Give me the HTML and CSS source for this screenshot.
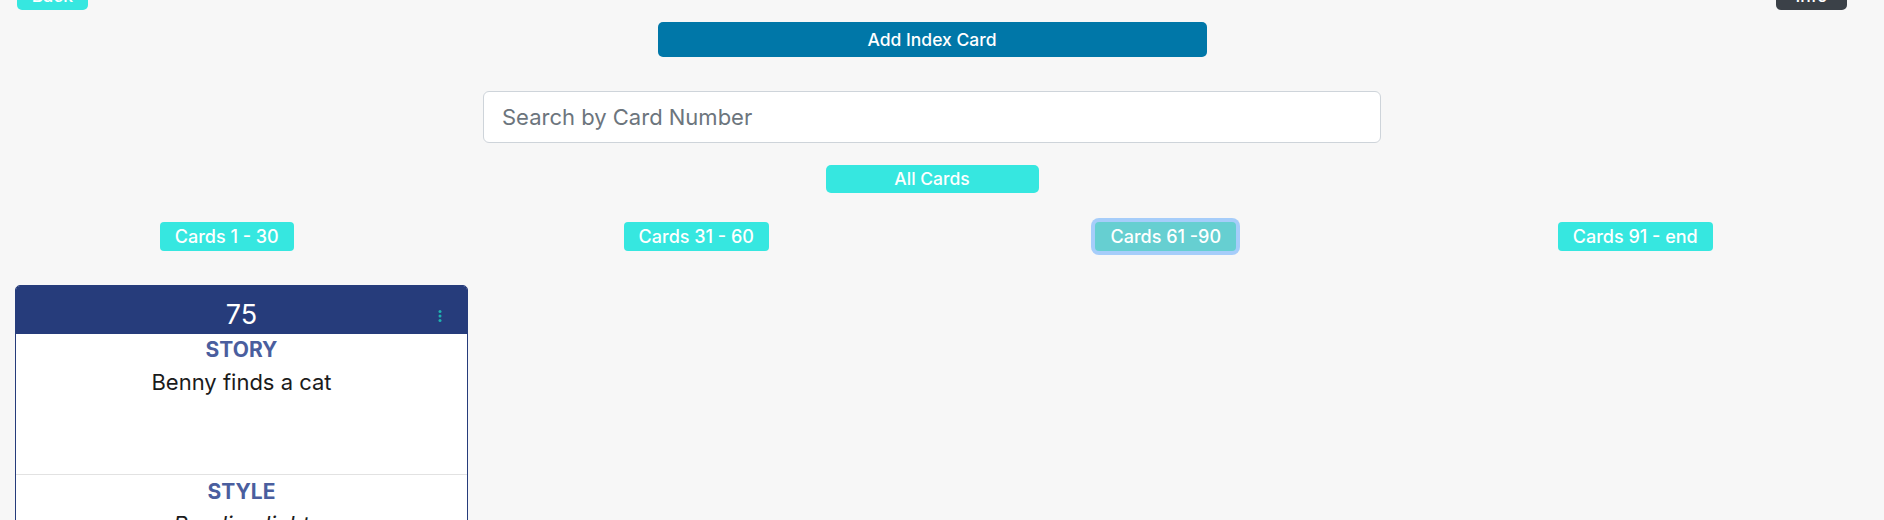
FILE: index.html
```html
<!DOCTYPE html>
<html lang="en">
<head>
<meta charset="utf-8">
<title>Index Cards</title>
<link rel="stylesheet" href="styles.css">
</head>
<body>
<div class="page">
  <header class="topbar">
    <button class="btn btn-teal btn-nav">Back</button>
    <button class="btn btn-dark btn-nav">Info</button>
  </header>

  <div class="center-row add-row">
    <button class="btn btn-add">Add Index Card</button>
  </div>

  <div class="center-row search-row">
    <input class="search" type="text" placeholder="Search by Card Number">
  </div>

  <div class="center-row all-row">
    <button class="btn btn-teal btn-all">All Cards</button>
  </div>

  <div class="ranges">
    <div class="range-col"><button class="btn btn-teal btn-range">Cards 1 - 30</button></div>
    <div class="range-col"><button class="btn btn-teal btn-range">Cards 31 - 60</button></div>
    <div class="range-col"><button class="btn btn-teal btn-range is-active">Cards 61 -90</button></div>
    <div class="range-col"><button class="btn btn-teal btn-range">Cards 91 - end</button></div>
  </div>

  <div class="cards">
    <article class="card">
      <div class="card-head">
        <span></span>
        <span class="card-num">75</span>
        <span class="kebab">
          <svg width="4" height="12" viewBox="0 0 4 12"><circle cx="2" cy="1.6" r="1.5"/><circle cx="2" cy="6" r="1.5"/><circle cx="2" cy="10.4" r="1.5"/></svg>
        </span>
      </div>
      <div class="card-body">
        <section class="field field-story">
          <div class="field-label">STORY</div>
          <div class="field-text">Benny finds a cat</div>
        </section>
        <section class="field">
          <div class="field-label">STYLE</div>
          <div class="field-text field-italic">Reading light</div>
        </section>
      </div>
    </article>
  </div>
</div>
</body>
</html>
```

FILE: styles.css
```css
* { box-sizing: border-box; }

html, body {
  margin: 0;
  padding: 0;
  background: #f7f7f7;
  font-family: "Inter", "Noto Sans", sans-serif;
  color: #212529;
  overflow: hidden;
}

.page {
  width: 1884px;
}

.btn {
  font-family: inherit;
  border: 0;
  border-radius: 5px;
  color: #ffffff;
  font-size: 17.5px;
  font-weight: 500;
  line-height: 1;
  cursor: pointer;
  display: inline-flex;
  align-items: center;
  justify-content: center;
  padding: 0 12px;
  white-space: nowrap;
}

.btn-teal { background: #36e7e0; }
.btn-dark { background: #3b4148; }

.topbar {
  display: flex;
  justify-content: space-between;
  padding: 0 37px 0 17px;
  margin-top: -19px;
}

.btn-nav {
  width: 71px;
  height: 29px;
}

.center-row {
  display: flex;
  justify-content: center;
  padding-right: 20px;
}

.add-row { margin-top: 12px; }

.btn-add {
  width: 549px;
  height: 35px;
  background: #0077a8;
}

.search-row { margin-top: 34px; }

.search {
  width: 898px;
  height: 52px;
  border: 1px solid #ced4da;
  border-radius: 6px;
  background: #ffffff;
  padding: 0 18px;
  font-family: inherit;
  font-size: 22px;
  color: #212529;
}

.search::placeholder { color: #6c757d; }

.all-row { margin-top: 22px; }

.btn-all {
  width: 213px;
  height: 28px;
}

.ranges {
  display: grid;
  grid-template-columns: repeat(4, 469.5px);
  justify-items: center;
  margin-left: -8px;
  margin-top: 29px;
}

.btn-range {
  height: 29px;
  padding: 0 15px;
  border-radius: 4px;
  font-size: 18px;
}

.btn-range.is-active {
  background: #66cfd1;
  box-shadow: 0 0 0 4px #a6cdfa;
}

.cards {
  display: grid;
  grid-template-columns: 453px;
  padding-left: 15px;
  margin-top: 34px;
}

.card {
  border: 1px solid #263c7b;
  border-radius: 5px;
  background: #ffffff;
  overflow: hidden;
}

.card-head {
  height: 48px;
  background: #263c7b;
  display: grid;
  grid-template-columns: 1fr auto 1fr;
  align-items: center;
  padding: 8px 25px 0 25px;
}

.card-num {
  color: #ffffff;
  font-size: 27px;
  font-weight: 400;
}

.kebab {
  justify-self: end;
  display: flex;
  padding-top: 4px;
}

.kebab svg { fill: #1fb2b0; }

.field {
  text-align: center;
  padding-top: 3px;
}

.field-story {
  height: 141px;
  border-bottom: 1px solid #e2e2e2;
}

.field + .field { padding-top: 4px; }

.field-label {
  color: #4a5e9e;
  font-size: 21px;
  font-weight: 700;
  line-height: 25px;
}

.field-text {
  margin-top: 7px;
  font-size: 22px;
  line-height: 27px;
  color: #1b1b1b;
}

.field-italic { font-style: italic; }
```
